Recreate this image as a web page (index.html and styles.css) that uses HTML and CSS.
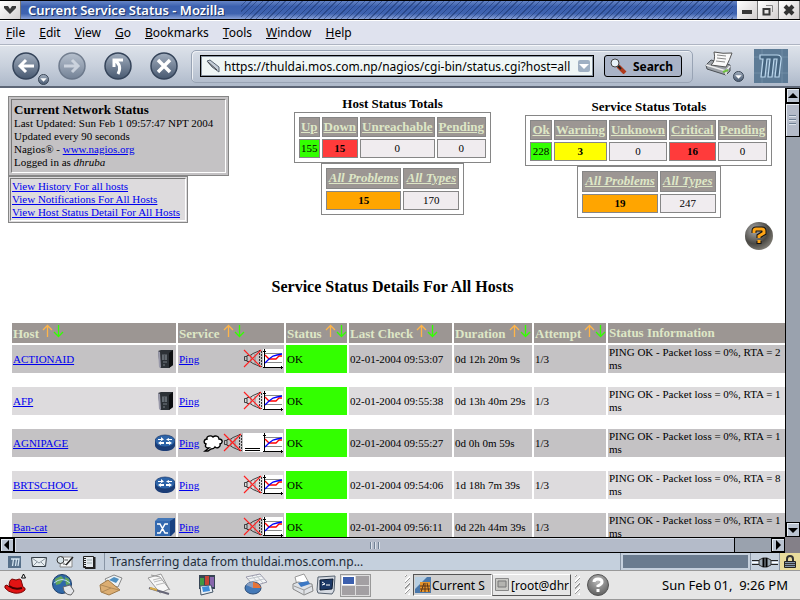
FILE: index.html
```html
<!DOCTYPE html>
<html lang="en">
  <head>
    <meta charset="UTF-8" />
    <meta name="viewport" content="width=device-width, initial-scale=1.0" />
    <title>Current Service Status - Mozilla</title>
    <link rel="stylesheet" href="styles.css">
  </head>
  <body>
    <!-- Shared icons -->
    <svg class="defs" aria-hidden="true">
      <defs>
        <linearGradient id="ball" x1="0" y1="0" x2="0" y2="1">
          <stop offset="0" stop-color="#a3afbf" />
          <stop offset="1" stop-color="#475870" />
        </linearGradient>
        <radialGradient id="dark-ball" cx="0.35" cy="0.3" r="0.8">
          <stop offset="0" stop-color="#aaa" />
          <stop offset="0.6" stop-color="#4a4843" />
          <stop offset="1" stop-color="#8b8880" />
        </radialGradient>
        <radialGradient id="grey-ball" cx="0.5" cy="0.3" r="0.7">
          <stop offset="0" stop-color="#bbb" />
          <stop offset="1" stop-color="#606060" />
        </radialGradient>
      </defs>
      <symbol id="i-arrows" viewBox="0 0 22 14">
        <path d="M5.500 13V1.500M1 6L5.500 1.500L10 6" fill="none" stroke="#ffb54a" stroke-width="1.300" />
        <path d="M16.500 1V12.500M12 8L16.500 12.500L21 8" fill="none" stroke="#33ff00" stroke-width="1.300" />
      </symbol>
      <symbol id="i-server" viewBox="0 0 20 20">
        <path d="M3 2l3-1h12v15l-4 3H5z" fill="#2c3136" />
        <path d="M14 4l4-3v15l-4 3z" fill="#0c0e10" />
        <path d="M3 2l1 16 2 1-1-16z" fill="#99a" />
        <path d="M7 5h5v6H7z" fill="#4a5056" />
        <path d="M8 6v5M11 6v5M8 13h4M9 15v2" stroke="#8b9299" stroke-width="0.8" />
      </symbol>
      <symbol id="i-router" viewBox="0 0 20 20">
        <path d="M0 8v5c1 3 5 5 10 5s9-2 10-5V8z" fill="#1b3d77" />
        <ellipse cx="10" cy="8" rx="10" ry="6" fill="#2c63a8" stroke="#17376c" stroke-width="0.7" />
        <path d="M3 6h3V4l3 2.500L6 8V7H3zM9 9H6V8L3 10l3 2v-1h3zM17 6h-3V5l-3 1.500L14 8V7h3zM11 9h3V8l3 2-3 2v-1h-3z" fill="#fff" />
      </symbol>
      <symbol id="i-switch" viewBox="0 0 20 20">
        <path d="M0 5l4-4h16v14l-4 4H0z" fill="#174080" />
        <path d="M0 4h15v15H0z" fill="#3268af" />
        <path d="M0 4l3-3h17l-5 3z" fill="#4377b8" />
        <path d="M2 7h3l5 9h3M2 16h3l5-9h3" fill="none" stroke="#fff" stroke-width="1.500" />
      </symbol>
      <symbol id="i-muted" viewBox="0 0 20 20">
        <path d="M4 7.500H1.500v4H4M4 6.500v6h3l3 2 7 3M4 6.500h3l3-2 7-3" fill="none" stroke="#333" stroke-width="0.9" />
        <path d="M8 6v7M12 5v10" stroke="#777" stroke-width="0.8" />
        <path d="M16.500 1v17M18.500 2v16" stroke="#222" stroke-dasharray="2 1" stroke-width="0.9" />
        <path d="M1 1l17 17M18 1L1 18" stroke="#ff2020" stroke-width="1.200" />
      </symbol>
      <symbol id="i-graph" viewBox="0 0 20 20">
        <path fill="#fff" d="M0 0h20v19H0z" />
        <path d="M1 4.500h18M1 13.500h18" stroke="#888" />
        <path d="M1.500 0v19M0 18.500h20M0 2.500h3M18.500 17v3" stroke="#000" />
        <path d="M2 6l4 4h7l3-3h3" fill="none" stroke="#f00" stroke-width="1.300" />
        <path d="M2 14l4-4 4-3 4-1 5-1" fill="none" stroke="#00f" stroke-width="1.300" />
      </symbol>
      <symbol id="i-comment" viewBox="0 0 20 20">
        <path d="M2 18l4-3c-4 0-4-2-3-4-3-1-2-5 1-5-1-3 4-4 6-2 2-2 6-1 6 2 4 0 4 4 1 5 1 3-3 5-5 3-1 2-3 2-4 2l-3 2z" fill="#fff" stroke="#000" stroke-width="1.400" />
      </symbol>
      <symbol id="i-delay" viewBox="0 0 20 20">
        <path fill="#fff" d="M0 0h20v19H0z" />
        <path d="M2 15.500h15M2 17.500h15" stroke="#000" />
      </symbol>
      <symbol id="i-m" viewBox="0 0 34 34">
        <path fill="#5d7b96" d="M0 0h34v34H0z" />
        <path d="M0 8h34M0 24h34M8 0v34M28 0v34" stroke="#718da5" />
        <path d="M6 6h17q5 0 4 5l-2 17h-4l2-18h-3l-2 18h-4l2-18h-3l-2 18H7l2-18H6z" fill="#45647f" stroke="#bcd8ee" stroke-width="1.200" />
      </symbol>
      <symbol id="i-tri" viewBox="0 0 12 12">
        <path d="M1 4h10L6 9z" fill="currentColor" />
      </symbol>
      <symbol id="i-drop" viewBox="0 0 12 12">
        <circle cx="6" cy="6" r="5.500" fill="url(#ball)" stroke="#354150" />
        <path d="M2.500 4.500h7L6 8.500z" fill="#fff" />
      </symbol>
      <symbol id="i-printer" viewBox="0 0 30 26">
        <path d="M1 14l5-5 19 5v6l-4 4L2 18z" fill="#9ca1a7" stroke="#4a4f55" />
        <path d="M1 14l20 6 4-5M21 20v4" fill="none" stroke="#eee" stroke-width="1.500" />
        <path d="M6 14q5-4 3-13 9 2 18 1-2 6-6 14z" fill="#fafafa" stroke="#555" />
        <path d="M12 4l9 1M12 7l9 1M11 10l9 1" stroke="#888" />
        <path d="M18 21l5-2" stroke="#6fc040" stroke-width="2" />
      </symbol>
    </svg>

    <!-- Title bar -->
    <header class="titlebar">
      <button class="win-btn" aria-label="Window menu">
        <svg width="14" height="10" viewBox="0 0 14 10"><path d="M1 1h4l2 3 2-3h4v2L7 9 1 3z" fill="#3a3a3a" /></svg>
      </button>
      <div class="title">Current Service Status - Mozilla</div>
      <div class="hatch"></div>
      <button class="win-btn" aria-label="Minimize">
        <svg width="12" height="12"><path d="M1 6h10v4H1z" fill="#383838" /></svg>
      </button>
      <button class="win-btn" aria-label="Restore">
        <svg width="12" height="12"><path d="M4 1.500h6.500V8" fill="none" stroke="#888" /><path d="M1.500 5h6v5.500h-6zM1 5h7" fill="none" stroke="#383838" stroke-width="2" /></svg>
      </button>
      <button class="win-btn" aria-label="Close">
        <svg width="12" height="12"><path d="M2 2l8 8M10 2l-8 8" stroke="#333" stroke-width="4" /></svg>
      </button>
    </header>

    <nav class="menubar">
      <button><u>F</u>ile</button>
      <button><u>E</u>dit</button>
      <button><u>V</u>iew</button>
      <button><u>G</u>o</button>
      <button><u>B</u>ookmarks</button>
      <button><u>T</u>ools</button>
      <button><u>W</u>indow</button>
      <button><u>H</u>elp</button>
    </nav>

    <!-- Navigation toolbar -->
    <div class="toolbar">
      <div class="nav-buttons">
        <button class="nav-btn" aria-label="Back">
          <svg width="28" height="28"><circle cx="14" cy="14" r="13" fill="url(#ball)" stroke="#35445a" stroke-width="1.500" /><path d="M22 14H9M14 8l-6 6 6 6" fill="none" stroke="#fff" stroke-width="3" /></svg>
          <svg class="nav-drop" width="13" height="11"><use href="#i-drop" /></svg>
        </button>
        <button class="nav-btn faded" aria-label="Forward">
          <svg width="28" height="28"><circle cx="14" cy="14" r="13" fill="url(#ball)" stroke="#35445a" stroke-width="1.500" /><path d="M6 14h13M14 8l6 6-6 6" fill="none" stroke="#cdd4de" stroke-width="3" /></svg>
        </button>
        <button class="nav-btn" aria-label="Reload">
          <svg width="28" height="28"><circle cx="14" cy="14" r="13" fill="url(#ball)" stroke="#35445a" stroke-width="1.500" /><path d="M10 15V8h9M10 8c6 3 7 8 4 14" fill="none" stroke="#fff" stroke-width="3" /></svg>
        </button>
        <button class="nav-btn" aria-label="Stop">
          <svg width="28" height="28"><circle cx="14" cy="14" r="13" fill="url(#ball)" stroke="#35445a" stroke-width="1.500" /><path d="M8 8l12 12M20 8L8 20" stroke="#fff" stroke-width="3.500" /></svg>
        </button>
      </div>
      <form class="location">
        <div class="urlbox">
          <svg width="14" height="14"><path d="M1 2l3-1 9 7v5L6 8z" fill="#c4ced8" stroke="#5a6673" /><path d="M2 3l9 8" stroke="#444" /></svg>
          <input type="text" aria-label="Location" value="https://thuldai.mos.com.np/nagios/cgi-bin/status.cgi?host=all">
          <button type="button" class="url-drop" aria-label="History"><svg width="12" height="12"><use href="#i-tri" /></svg></button>
        </div>
        <button type="button" class="search">
          <svg width="18" height="16"><path d="M9 8l7 7" stroke="#b03a1c" stroke-width="4" /><path d="M8 7l4 4" stroke="#222" stroke-width="2" /><circle cx="6" cy="5" r="4" fill="#e8f2fa" stroke="#444" /></svg>
          Search
        </button>
      </form>
      <button class="print" aria-label="Print">
        <svg width="30" height="26"><use href="#i-printer" /></svg>
        <svg class="nav-drop" width="13" height="11"><use href="#i-drop" /></svg>
      </button>
      <a class="throbber" href="#" aria-label="Mozilla"><svg width="34" height="34"><use href="#i-m" /></svg></a>
    </div>

    <div class="viewport">
      <main class="page">
        <div class="summary">
          <div class="col">
            <div class="infobox">
              <div class="infobox-in">
                <h2>Current Network Status</h2>
                <p>Last Updated: Sun Feb 1 09:57:47 NPT 2004</p>
                <p>Updated every 90 seconds</p>
                <p>Nagios® - <a href="#">www.nagios.org</a></p>
                <p>Logged in as <i>dhruba</i></p>
              </div>
            </div>
            <div class="linkbox">
              <div class="linkbox-in">
                <a href="#">View History For all hosts</a>
                <a href="#">View Notifications For All Hosts</a>
                <a href="#">View Host Status Detail For All Hosts</a>
              </div>
            </div>
          </div>

          <!-- Host totals -->
          <div class="col totals">
            <h2>Host Status Totals</h2>
            <table class="totals-table">
              <tr>
                <th><a href="#">Up</a></th>
                <th><a href="#">Down</a></th>
                <th><a href="#">Unreachable</a></th>
                <th><a href="#">Pending</a></th>
              </tr>
              <tr>
                <td class="ok">155</td>
                <td class="critical">15</td>
                <td>0</td>
                <td>0</td>
              </tr>
            </table>
            <table class="totals-table all">
              <tr>
                <th><a href="#"><i>All Problems</i></a></th>
                <th><a href="#"><i>All Types</i></a></th>
              </tr>
              <tr>
                <td class="problems">15</td>
                <td>170</td>
              </tr>
            </table>
          </div>

          <!-- Service totals -->
          <div class="col totals services">
            <h2>Service Status Totals</h2>
            <table class="totals-table">
              <tr>
                <th><a href="#">Ok</a></th>
                <th><a href="#">Warning</a></th>
                <th><a href="#">Unknown</a></th>
                <th><a href="#">Critical</a></th>
                <th><a href="#">Pending</a></th>
              </tr>
              <tr>
                <td class="ok">228</td>
                <td class="warning">3</td>
                <td>0</td>
                <td class="critical">16</td>
                <td>0</td>
              </tr>
            </table>
            <table class="totals-table all">
              <tr>
                <th><a href="#"><i>All Problems</i></a></th>
                <th><a href="#"><i>All Types</i></a></th>
              </tr>
              <tr>
                <td class="problems">19</td>
                <td>247</td>
              </tr>
            </table>
            <a class="help" href="#" aria-label="Help">
              <svg width="28" height="28" viewBox="0 0 28 28"><circle cx="14" cy="14" r="14" fill="url(#dark-ball)" /><path d="M9 11V9q0-2 2-2h6q2 0 2 2v2l-5 3v2M14 19v3" fill="none" stroke="#111" stroke-width="5" /><path d="M9 11V9q0-2 2-2h6q2 0 2 2v2l-5 3v2M14 18v3" fill="none" stroke="#ffa516" stroke-width="3" /></svg>
            </a>
          </div>
        </div>

        <h1>Service Status Details For All Hosts</h1>

        <table class="status">
          <colgroup>
            <col class="c-host"><col class="c-service"><col class="c-status"><col class="c-check"><col class="c-duration"><col class="c-attempt"><col>
          </colgroup>
          <tr>
            <th>Host <a href="#" aria-label="Sort by host"><svg width="22" height="14"><use href="#i-arrows" /></svg></a></th>
            <th>Service <a href="#" aria-label="Sort by service"><svg width="22" height="14"><use href="#i-arrows" /></svg></a></th>
            <th>Status <a href="#" aria-label="Sort by status"><svg width="22" height="14"><use href="#i-arrows" /></svg></a></th>
            <th>Last Check <a href="#" aria-label="Sort by last check"><svg width="22" height="14"><use href="#i-arrows" /></svg></a></th>
            <th>Duration <a href="#" aria-label="Sort by duration"><svg width="22" height="14"><use href="#i-arrows" /></svg></a></th>
            <th>Attempt <a href="#" aria-label="Sort by attempt"><svg width="22" height="14"><use href="#i-arrows" /></svg></a></th>
            <th>Status Information</th>
          </tr>
          <tr class="even">
            <td><div class="cell"><a href="#">ACTIONAID</a><svg width="20" height="20"><use href="#i-server" /></svg></div></td>
            <td><div class="cell"><a href="#">Ping</a><span class="icons"><svg width="20" height="20"><use href="#i-muted" /></svg><svg width="20" height="20"><use href="#i-graph" /></svg></span></div></td>
            <td class="ok">OK</td>
            <td>02-01-2004 09:53:07</td>
            <td>0d 12h 20m 9s</td>
            <td>1/3</td>
            <td>PING OK - Packet loss = 0%, RTA = 2<br>ms</td>
          </tr>
          <tr class="gap"><td colspan="7"></td></tr>
          <tr class="odd">
            <td><div class="cell"><a href="#">AFP</a><svg width="20" height="20"><use href="#i-server" /></svg></div></td>
            <td><div class="cell"><a href="#">Ping</a><span class="icons"><svg width="20" height="20"><use href="#i-muted" /></svg><svg width="20" height="20"><use href="#i-graph" /></svg></span></div></td>
            <td class="ok">OK</td>
            <td>02-01-2004 09:55:38</td>
            <td>0d 13h 40m 29s</td>
            <td>1/3</td>
            <td>PING OK - Packet loss = 0%, RTA = 1<br>ms</td>
          </tr>
          <tr class="gap"><td colspan="7"></td></tr>
          <tr class="even">
            <td><div class="cell"><a href="#">AGNIPAGE</a><svg width="20" height="20"><use href="#i-router" /></svg></div></td>
            <td><div class="cell"><a href="#">Ping</a><span class="icons"><svg width="20" height="20"><use href="#i-comment" /></svg><svg width="20" height="20"><use href="#i-muted" /></svg><svg width="20" height="20"><use href="#i-delay" /></svg><svg width="20" height="20"><use href="#i-graph" /></svg></span></div></td>
            <td class="ok">OK</td>
            <td>02-01-2004 09:55:27</td>
            <td>0d 0h 0m 59s</td>
            <td>1/3</td>
            <td>PING OK - Packet loss = 0%, RTA = 1<br>ms</td>
          </tr>
          <tr class="gap"><td colspan="7"></td></tr>
          <tr class="odd">
            <td><div class="cell"><a href="#">BRTSCHOOL</a><svg width="20" height="20"><use href="#i-router" /></svg></div></td>
            <td><div class="cell"><a href="#">Ping</a><span class="icons"><svg width="20" height="20"><use href="#i-muted" /></svg><svg width="20" height="20"><use href="#i-graph" /></svg></span></div></td>
            <td class="ok">OK</td>
            <td>02-01-2004 09:54:06</td>
            <td>1d 18h 7m 39s</td>
            <td>1/3</td>
            <td>PING OK - Packet loss = 0%, RTA = 8<br>ms</td>
          </tr>
          <tr class="gap"><td colspan="7"></td></tr>
          <tr class="even">
            <td><div class="cell"><a href="#">Ban-cat</a><svg width="20" height="20"><use href="#i-switch" /></svg></div></td>
            <td><div class="cell"><a href="#">Ping</a><span class="icons"><svg width="20" height="20"><use href="#i-muted" /></svg><svg width="20" height="20"><use href="#i-graph" /></svg></span></div></td>
            <td class="ok">OK</td>
            <td>02-01-2004 09:56:11</td>
            <td>0d 22h 44m 39s</td>
            <td>1/3</td>
            <td>PING OK - Packet loss = 0%, RTA = 1<br>ms</td>
          </tr>
        </table>
      </main>

      <div class="vscroll">
        <button class="sb" aria-label="Scroll up"><svg width="10" height="10"><path d="M5 2l5 5H0z" /></svg></button>
        <div class="vthumb"></div>
        <div class="track"></div>
        <button class="sb" aria-label="Scroll down"><svg width="10" height="10"><path d="M0 3h10L5 8z" /></svg></button>
      </div>
      <div class="hscroll">
        <button class="sb" aria-label="Scroll left"><svg width="10" height="10"><path d="M7 0v10L2 5z" /></svg></button>
        <div class="hthumb"></div>
        <div class="track"></div>
        <button class="sb" aria-label="Scroll right"><svg width="10" height="10"><path d="M3 0v10l5-5z" /></svg></button>
      </div>
      <div class="corner"></div>
    </div>

    <!-- Browser status bar -->
    <div class="statusbar">
      <div class="components">
        <button aria-label="Navigator"><svg width="14" height="14" viewBox="0 0 14 14"><path fill="#56708a" d="M0 1h13v12H0z" /><path d="M3 4h8L10 11M5.500 4l-1 7M8.500 4l-1 7" fill="none" stroke="#d6e6f2" stroke-width="1.300" /></svg></button>
        <button aria-label="Mail"><svg width="18" height="14"><path d="M1.500 2.500h15l-1 9h-13z" fill="#e8eef2" stroke="#333c44" /><path d="M2 3l7 5 7-5M3 11l4-4M15 11l-4-4" fill="none" stroke="#8b969f" /></svg></button>
        <button aria-label="Composer"><svg width="18" height="14"><path d="M5 2h11v10H4z" fill="#f4f6f8" stroke="#888" /><circle cx="4.500" cy="5" r="3.500" fill="#d8e4ea" stroke="#333" /><path d="M10 10l7-8" stroke="#222" stroke-width="1.500" /><path d="M9 5h3M7 9h2l1 1" fill="none" stroke="#555" /></svg></button>
        <button aria-label="Address Book"><svg width="14" height="14"><path d="M1.500 1.500h10v11h-10z" fill="#e4e9ee" stroke="#222" /><path d="M12.500 2v11H3" fill="none" stroke="#222" stroke-width="2" /><path d="M3 3v9" stroke="#222" stroke-width="2" stroke-dasharray="1 1" /><path d="M5 5h5M5 8h5" stroke="#9aa" /></svg></button>
      </div>
      <div class="message">Transferring data from thuldai.mos.com.np...</div>
      <div class="progress"><div class="bar"></div></div>
      <div class="panel"><svg width="26" height="14"><path d="M0 5.500h26M0 9.500h26" stroke="#222" /><path d="M0 7.500h26" stroke="#fff" /><path d="M7 5l4-2h4l4 2v5l-4 2h-4l-4-2z" fill="#9daab5" stroke="#333" /><path d="M11.500 3v9M14.500 3v9" stroke="#000" stroke-width="2" /></svg></div>
      <div class="panel secure"><svg width="14" height="14"><path d="M4 7V4q0-3 3-3t3 3v3" fill="none" stroke="#333" stroke-width="2" /><path d="M1.500 6.500h11v6h-11z" fill="#8496ac" stroke="#222" /><path d="M2 8.500h10M2 10.500h10" stroke="#333" /></svg></div>
    </div>

    <!-- Desktop panel -->
    <footer class="taskbar">
      <div class="launchers">
        <button aria-label="Main menu"><svg width="24" height="24"><path d="M6 14q0-7 3-8l4 1q4-2 5 0l2 7q3 1 2 3-4 4-11 3-6-1-9-5-1-3 2-3z" fill="#e11313" stroke="#7a0606" /><path d="M6 13q5 4 13 2" fill="none" stroke="#400" stroke-width="2" /><path d="M20.500 1l2 4h-4z" fill="#fff" stroke="#000" /></svg></button>
        <button aria-label="Web browser"><svg width="24" height="24"><circle cx="11" cy="11" r="9.500" fill="#2f68a8" stroke="#1d3f6c" /><path d="M4 6l6-3 3 3-4 5-4 1zM14 4l4 2 1 5-4 1z" fill="#63a75c" /><path d="M3 10q8-7 16 0" fill="none" stroke="#bcd9f2" /><path d="M12 14l7-2 4 6-3 4q-7 0-8-8z" fill="#e4e6ea" stroke="#666" /></svg></button>
        <button aria-label="Mail"><svg width="24" height="24"><path d="M6 6l9-4 8 3-4 9-9-2z" fill="#eef3f6" stroke="#888" /><path d="M10 7l5-3 5 2-3 4z" fill="#4e8fc0" /><path d="M1 12l8-5 12 10-11 5L2 19z" fill="#dcae72" stroke="#a07a48" /><path d="M2 12l10 3 8 2M12 15L3 19" fill="none" stroke="#b08a58" /></svg></button>
        <button aria-label="Writer"><svg width="24" height="24"><path d="M1 5l13-4 8 15-9 4z" fill="#f7f7f7" stroke="#999" /><path d="M4 2l9 2 10 13" fill="none" stroke="#999" /><path d="M6 7l8-2M7 9l8-2M9 12l8-2" stroke="#bbb" /><path d="M2 15l20 6" stroke="#667" stroke-width="2" /><path d="M3 15l7 2" stroke="#d7ab45" stroke-width="2" /></svg></button>
        <button aria-label="Impress"><svg width="24" height="24"><path d="M4 2h16v14H4z" fill="#374554" /><path d="M5 5h4v9H5z" fill="#3f9944" /><path d="M10 3h4v11h-4z" fill="#c44436" /><path d="M15 4h4v10h-4z" fill="#8867ad" /><path d="M5 13l11-1 2 7-12 3z" fill="#e8eff6" stroke="#456" /><path d="M7 14l7-1 1 5-7 1z" fill="#3d8ddb" /></svg></button>
        <button aria-label="Calc"><svg width="24" height="24"><path d="M3 4l14-3 7 8-13 4z" fill="#f3f5f6" stroke="#99a" /><path d="M5 6l14-3M7 9l14-3M9 3l7 8M13 2l7 8" stroke="#c0c6cc" /><ellipse cx="10" cy="15" rx="8" ry="6" fill="#4479b7" stroke="#284c79" /><path d="M10 15V9q7 1 8 6z" fill="#e67438" /><path d="M10 15l-7-3q2-3 7-3z" fill="#8a9fc0" /></svg></button>
        <button aria-label="Print manager"><svg width="24" height="24"><path d="M6 12L4 4l9-3 5 9z" fill="#fff" stroke="#999" /><path d="M2 11l5-2 14 2 1 7-9 4L2 16z" fill="#dfe2e6" stroke="#888" /><path d="M7 10l10-2 2 3-9 3z" fill="#3c78c4" /><path d="M3 13l10 4 8-4M13 17v4" fill="none" stroke="#999" /></svg></button>
      </div>
      <button class="term" aria-label="Terminal"><svg width="22" height="22"><path d="M3 3l17-1-1 15-2 3-14-1-1-3z" fill="#d5dae2" stroke="#54606e" /><path d="M5 6l13-1-1 10-12 1z" fill="#1c3866" stroke="#0c1a30" /><path d="M7 8l3 2-3 1M11 11h4" fill="none" stroke="#fff" /></svg></button>
      <div class="pager">
        <span class="current"></span><span></span><span></span><span></span>
      </div>
      <div class="handle"></div>
      <button class="task active">
        <svg width="16" height="16"><path fill="#4a78ab" d="M0 0h16v16H0z" /><path d="M0 0h12L0 12z" fill="#b8cfe2" /><path d="M5 5h10v10H5z" fill="#e5942c" /><path d="M6 15l3-9M10 15V6M14 15l-2-9M5 9h10M5 12h10" stroke="#5c3718" /></svg>
        <span>Current S</span>
      </button>
      <button class="task">
        <svg width="16" height="16"><path d="M1.500 1.500h13v12h-13z" fill="#c9c9c5" stroke="#888" /><path d="M4 4h8v6H4z" fill="#b4b4b0" stroke="#777" /></svg>
        <span>[root@dhr</span>
      </button>
      <div class="handle"></div>
      <button class="about" aria-label="Help"><svg width="22" height="22"><circle cx="11" cy="11" r="10.500" fill="url(#grey-ball)" stroke="#555" /><path d="M7 8q0-3 4-3t4 3q0 2-4 4v1M11 15v3" fill="none" stroke="#fff" stroke-width="3" /></svg></button>
      <div class="clock">Sun Feb 01, &nbsp;9:26 PM</div>
    </footer>
  </body>
</html>
```
FILE: styles.css
```css
* {
  box-sizing: border-box;
}

body {
  margin: 0;
  height: 100vh;
  display: flex;
  flex-direction: column;
  overflow: hidden;
  font-family: "Noto Sans", "Open Sans", sans-serif;
  font-size: 12px;
  color: #000;
  background: #dfe3ee;
}

button {
  font: inherit;
  color: inherit;
  border: none;
  background: none;
  padding: 0;
  margin: 0;
}

svg {
  display: block;
  flex: none;
}

.defs {
  position: absolute;
  width: 0;
  height: 0;
}

/* Title bar */
.titlebar {
  display: flex;
  height: 20px;
  flex: none;
  border-top: 1px solid #000;
  border-bottom: 1px solid #000;
  background: linear-gradient(#6685c6, #3b60ae 30%, #3f63b0 70%, #8aa2d8);
}

.win-btn {
  width: 21px;
  display: flex;
  align-items: center;
  justify-content: center;
  border-right: 1px solid #777;
  background: linear-gradient(135deg, #fff, #d3cfcf);
}

.title {
  padding: 0 16px 0 7px;
  line-height: 18px;
  font-size: 13px;
  font-weight: 600;
  color: #fff;
  text-shadow: 1px 1px 0 #1f3566;
}

.hatch {
  flex: 1;
  margin-right: 4px;
  background: repeating-linear-gradient(135deg, transparent 0 3px, rgba(20, 45, 100, 0.5) 3px 4px);
}

/* Menu */
.menubar {
  display: flex;
  flex: none;
  gap: 14px;
  height: 25px;
  padding: 0 6px;
  border-top: 1px solid #fff;
  border-bottom: 1px solid #aeb4c2;
  background: #dfe2ee;
}

/* Toolbar */
.toolbar {
  display: flex;
  flex: none;
  align-items: center;
  height: 43px;
  padding: 0 12px;
  border-top: 1px solid #f5f7fa;
  border-bottom: 2px solid #5d6676;
  background: linear-gradient(#dde2ea, #c8d0dc 50%, #aeb9ca);
}

.nav-buttons {
  display: flex;
  gap: 18px;
  margin-right: 13px;
}

.nav-btn,
.print {
  position: relative;
}

.nav-btn.faded {
  opacity: 0.6;
}

.nav-drop {
  position: absolute;
  right: -10px;
  bottom: -5px;
}

.location {
  flex: 1;
  min-width: 0;
  display: flex;
  align-items: center;
  gap: 10px;
  height: 33px;
  padding: 0 10px 0 8px;
  border: 1px solid #98a3b4;
  border-radius: 5px;
  box-shadow: inset 1px 1px 0 #eef1f5;
}

.urlbox {
  flex: 1;
  min-width: 0;
  display: flex;
  align-items: center;
  height: 22px;
  padding: 0 3px 0 5px;
  border: 1px solid #000;
  box-shadow: inset 0 0 0 1px #8c97a5;
  background: #eff6f6;
}

.urlbox input {
  flex: 1;
  min-width: 0;
  height: 18px;
  margin-left: 4px;
  padding: 0;
  border: none;
  background: none;
  font: inherit;
}

.url-drop {
  padding: 0;
  border-radius: 2px;
  color: #fff;
  background: #9fb0c3;
}

.search {
  display: flex;
  align-items: center;
  gap: 6px;
  height: 22px;
  padding: 0 8px 0 4px;
  border: 1px solid #000;
  border-radius: 3px;
  font-weight: 700;
  background: #a9b3c7;
}

.print {
  margin: 0 19px 5px 12px;
}

/* Page area and scrollbars */
.viewport {
  flex: 1;
  min-height: 0;
  display: grid;
  grid-template-columns: 1fr 15px;
  grid-template-rows: 1fr 16px;
}

.page {
  min-width: 0;
  min-height: 0;
  overflow: hidden;
  padding: 8px;
  background: #fff;
  font-family: "Liberation Serif", serif;
  font-size: 11px;
}

.vscroll,
.hscroll {
  display: flex;
  background: #9aa2ae;
}

.vscroll {
  flex-direction: column;
  border-left: 1px solid #000;
}

.hscroll {
  border-top: 1px solid #000;
  border-bottom: 1px solid #000;
}

.sb {
  width: 14px;
  height: 15px;
  flex: none;
  display: flex;
  align-items: center;
  justify-content: center;
  border: 1px solid #000;
  background: #bac3d0;
  box-shadow: inset 1px 1px 0 #e8edf3;
}

.vthumb {
  height: 34px;
  border: 1px solid #000;
  border-left: none;
  box-shadow: inset 1px 1px 0 #e8edf3;
  background: repeating-linear-gradient(#6f8094 0 1px, #dde4ec 1px 2px, #b4bbc9 2px 4px) center / 7px 10px no-repeat #b4bbc9;
}

.hthumb {
  flex: 20;
  border: 1px solid #000;
  border-width: 0 1px;
  box-shadow: inset 1px 1px 0 #d8dee8;
  background: repeating-linear-gradient(90deg, #6f8094 0 1px, #dde4ec 1px 2px, #b4bbc9 2px 4px) center / 10px 7px no-repeat #b4bbc9;
}

.track {
  flex: 1;
}

.hscroll .sb {
  height: 14px;
}

.corner {
  background: #848088;
}

/* Nagios page */
h1,
h2,
p {
  margin: 0;
}

.page a {
  color: #0000ee;
}

.summary {
  display: grid;
  grid-template-columns: repeat(3, 1fr);
}

.col {
  display: flex;
  flex-direction: column;
  align-items: flex-start;
}

.infobox,
.linkbox {
  border: 1px solid #868686;
  line-height: 13px;
  white-space: nowrap;
}

.infobox {
  padding: 2px;
  background: #c4c2c4;
}

.infobox-in {
  padding: 2px 12px 3px 2px;
  border: 1px solid;
  border-color: #777 #fff #fff #777;
}

.infobox h2 {
  font-size: 13px;
  line-height: 15px;
}

.linkbox {
  padding: 1px;
  background: #dddbdd;
}

.linkbox-in {
  padding: 1px 5px 1px 1px;
  border: 1px solid;
  border-color: #777 #fff #fff #777;
}

.linkbox a {
  display: block;
}

.totals {
  align-items: center;
}

.totals.services {
  padding-top: 3px;
}

.totals h2 {
  font-size: 13px;
  line-height: 16px;
}

.totals-table {
  border: 1px solid #868686;
  border-spacing: 2px;
  padding: 2px;
}

.totals-table th,
.totals-table td {
  padding: 1px;
  border: 1px solid #868686;
  text-align: center;
}

.totals-table th {
  font-size: 13px;
  line-height: 16px;
  background: #9c9693;
}

.totals-table.all th {
  padding: 1px 2px 2px;
}

.totals-table th a {
  color: #dee7c6;
}

.totals-table td {
  line-height: 15px;
  background: #f0ecef;
}

.totals-table .ok,
.status td.ok {
  background: #33ff00;
}

.totals-table .critical {
  font-weight: bold;
  background: #ff3b3b;
}

.totals-table .warning {
  font-weight: bold;
  background: #ffff00;
}

.totals-table .problems {
  font-weight: bold;
  background: #ffa500;
}

.help {
  align-self: flex-end;
  margin: 4px 4px 0 0;
}

h1 {
  margin: 28px 0 25px;
  font-size: 16px;
  line-height: 18px;
  text-align: center;
}

.status {
  width: 105%;
  margin-left: 2px;
  table-layout: fixed;
  border-spacing: 2px;
}

.c-host {
  width: 164px;
}

.c-service {
  width: 106px;
}

.c-status {
  width: 61px;
}

.c-check {
  width: 103px;
}

.c-duration {
  width: 78px;
}

.c-attempt {
  width: 72px;
}

.status th {
  height: 20px;
  padding: 0 1px;
  font-size: 13px;
  line-height: 16px;
  text-align: left;
  white-space: nowrap;
  color: #dee7c6;
  background: #9c9693;
}

.status th a {
  text-decoration: none;
}

.status th svg {
  display: inline-block;
}

.status td {
  height: 28px;
  padding: 0 1px;
  line-height: 13px;
  white-space: nowrap;
}

.even td {
  background: #c4c2c4;
}

.odd td {
  background: #dddbdd;
}

.status .gap td {
  height: 10px;
}

.cell {
  display: flex;
  align-items: center;
  justify-content: space-between;
}

.icons {
  display: flex;
}

/* Status bar */
.statusbar {
  display: flex;
  flex: none;
  height: 17px;
  background: #c5d0dd;
}

.components {
  display: flex;
  align-items: center;
  gap: 8px;
  padding: 0 8px;
  border-right: 1px solid #8895a5;
}

.message {
  flex: 1;
  padding-left: 5px;
  line-height: 17px;
  color: #222c38;
}

.progress {
  width: 130px;
  padding: 2px;
  border-left: 1px solid #8895a5;
}

.bar {
  height: 100%;
  background: #6a7b8f;
}

.panel {
  display: flex;
  align-items: center;
  padding: 0 1px;
  border-left: 1px solid #8895a5;
}

.secure {
  padding: 0 3px;
  background: #e9dc9c;
}

/* Desktop panel */
.taskbar {
  display: flex;
  flex: none;
  align-items: center;
  height: 30px;
  padding: 0 12px 0 3px;
  border-top: 1px solid #999;
  border-bottom: 1px solid #999;
  background: #e6e6e6;
}

.launchers {
  display: flex;
  gap: 24px;
}

.pager {
  display: grid;
  grid-template-columns: 13px 13px;
  grid-template-rows: 9px 9px;
  gap: 1px;
  margin: 0 34px 0 3px;
  padding: 1px;
  border: 1px solid #999;
  background: #ddd;
}

.pager span {
  background: #a3a0a3;
}

.pager .current {
  border: 1px solid #fff;
  background: #3c60ae;
}

.handle {
  width: 5px;
  height: 20px;
  background: repeating-linear-gradient(135deg, #fff 0 1px, #999 1px 2px, #e6e6e6 2px 4px);
}

.task {
  display: flex;
  align-items: center;
  gap: 1px;
  width: 79px;
  height: 22px;
  padding: 0 1px;
  border: 1px solid;
  border-color: #fff #555 #555 #999;
  white-space: nowrap;
}

.task.active {
  margin-left: 3px;
  border-color: #555 #fff #fff #555;
  background: #d0d0d0;
}

.about {
  margin-left: 7px;
}

.task + .handle {
  margin-left: 4px;
}

.clock {
  margin-left: auto;
  font-size: 13px;
}
```
